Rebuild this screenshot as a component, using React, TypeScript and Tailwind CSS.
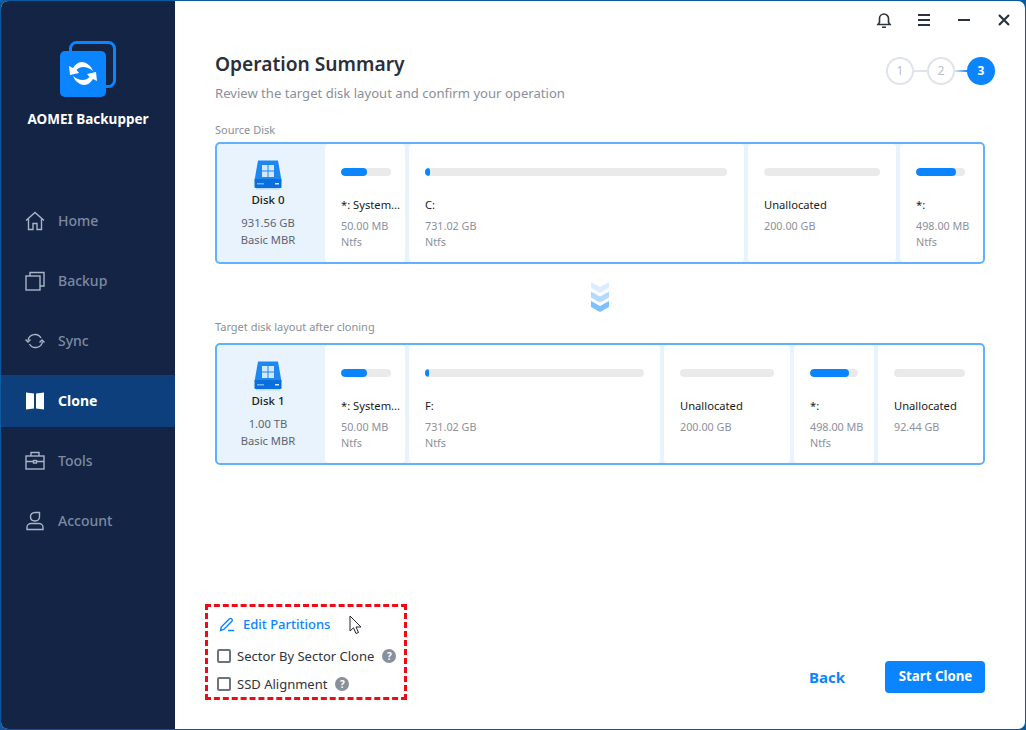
const font = { fontFamily: '"Noto Sans", sans-serif' };

// Sidebar entries, the icons are drawn by hand to match the original app
const navItems = [
  {
    label: "Home",
    icon: (
      <svg width="20" height="20" viewBox="0 0 20 20" fill="none" stroke="#a9b4c6" strokeWidth="1.4">
        <path d="M1 9.500 10 1.500l9 8M3.500 8v10.500h4.500v-6h4v6h4.500V8" />
      </svg>
    ),
  },
  {
    label: "Backup",
    icon: (
      <svg width="20" height="20" viewBox="0 0 20 20" fill="none" stroke="#a9b4c6" strokeWidth="1.4">
        <rect x="1" y="5" width="14" height="14" />
        <path d="M5 5V1.500h14V15h-4" />
      </svg>
    ),
  },
  {
    label: "Sync",
    icon: (
      <svg width="20" height="20" viewBox="0 0 20 20" fill="none" stroke="#a9b4c6" strokeWidth="1.4">
        <path d="M3 9.500a7 7 0 0 1 13-2.500M17.500 10.500a7 7 0 0 1-13 2.500" />
        <path d="M0.500 8.500 3 11l2.500-2.500M14.500 11.500 17 9l2.500 2.500" />
      </svg>
    ),
  },
  {
    label: "Clone",
    active: true,
    icon: (
      <svg width="20" height="20" viewBox="0 0 20 20" fill="#ffffff">
        <path d="M1 1.500 9 2.500v15l-8 1zM11 2.500l8-1v17l-8-1z" />
      </svg>
    ),
  },
  {
    label: "Tools",
    icon: (
      <svg width="20" height="20" viewBox="0 0 20 20" fill="none" stroke="#a9b4c6" strokeWidth="1.4">
        <rect x="1" y="5" width="18" height="13" />
        <path d="M6 5V1.500h8V5M1 10.500h7M12 10.500h7" />
        <rect x="8.500" y="9.500" width="3" height="2.500" />
      </svg>
    ),
  },
  {
    label: "Account",
    icon: (
      <svg width="20" height="20" viewBox="0 0 20 20" fill="none" stroke="#a9b4c6" strokeWidth="1.4">
        <path d="M10 1.500c-3 0-4.500 2-4.500 4.300 0 2.200 1.500 4.200 4.500 4.200s4.500-2 4.500-4.200V1.500z" />
        <path d="M2 18.500v-2.500c0-2 2-3.500 4-3.500h8c2 0 4 1.500 4 3.500v2.500z" />
      </svg>
    ),
  },
];

const sourcePartitions = [
  { name: "*: System...", size: "50.00 MB", fs: "Ntfs", used: 52, width: "w-[80px] pr-[14px]" },
  { name: "C:", size: "731.02 GB", fs: "Ntfs", used: 1.5, width: "flex-1 pr-[17px]" },
  { name: "Unallocated", size: "200.00 GB", fs: "", used: 0, width: "w-[148px] pr-[16px]" },
  { name: "*:", size: "498.00 MB", fs: "Ntfs", used: 82, width: "w-[83px] pr-[18px]" },
];

const targetPartitions = [
  { name: "*: System...", size: "50.00 MB", fs: "Ntfs", used: 52, width: "w-[80px] pr-[14px]" },
  { name: "F:", size: "731.02 GB", fs: "Ntfs", used: 2, width: "flex-1 pr-[16px]" },
  { name: "Unallocated", size: "200.00 GB", fs: "", used: 0, width: "w-[126px] pr-[16px]" },
  { name: "*:", size: "498.00 MB", fs: "Ntfs", used: 82, width: "w-[80px] pr-[16px]" },
  { name: "Unallocated", size: "92.44 GB", fs: "", used: 0, width: "w-[105px] pr-[18px]" },
];

function DiskIcon() {
  return (
    <svg width="30" height="32" viewBox="0 0 30 32">
      <path d="M5 1.500h20l3.500 20h-27z" fill="#1e88f0" />
      <rect x="1.500" y="20" width="27" height="9" rx="1" fill="#0a6fdc" />
      <rect x="3" y="29" width="24" height="1.500" fill="#bcdcfb" />
      <rect x="9" y="6" width="5.500" height="5.500" fill="#d4e8fc" />
      <rect x="15.500" y="6" width="5.500" height="5.500" fill="#d4e8fc" />
      <rect x="9" y="12.500" width="5.500" height="5.500" fill="#d4e8fc" />
      <rect x="15.500" y="12.500" width="5.500" height="5.500" fill="#d4e8fc" />
      <rect x="4" y="24" width="7" height="1.500" fill="#6db4f7" />
      <rect x="22" y="24" width="4" height="1.500" fill="#d4e8fc" />
    </svg>
  );
}

function PartitionCard({ name, size, fs, used, width }: (typeof sourcePartitions)[number]) {
  return (
    <div className={`${width} h-full rounded-[4px] bg-white pl-[16px] pt-[24px]`}>
      <div className="h-[8px] overflow-hidden rounded-full bg-[#eaeaea]">
        <div className="h-full rounded-full bg-[#0a84ff]" style={{ width: `${used}%` }} />
      </div>
      <div className="mt-[20px] whitespace-nowrap text-[11.200px] leading-[18px] text-[#1a1a1a]">{name}</div>
      <div className="mt-[3px] whitespace-nowrap text-[10.800px] leading-[18px] text-[#8c919c]">{size}</div>
      {fs && <div className="-mt-[2px] text-[10.800px] leading-[18px] text-[#8c919c]">{fs}</div>}
    </div>
  );
}

function DiskRow({
  name,
  size,
  kind,
  partitions,
}: {
  name: string;
  size: string;
  kind: string;
  partitions: typeof sourcePartitions;
}) {
  return (
    <div className="flex h-[122px] items-stretch gap-[4px] rounded-[5px] border-2 border-[#62b1ff] bg-[#e8f3fe]">
      <div className="flex w-[104px] shrink-0 flex-col items-center pr-[2px] pt-[15px]">
        <DiskIcon />
        <div className="text-[11.500px] font-medium leading-[18px] text-[#1a1a1a]">{name}</div>
        <div className="mt-[5px] text-[11.200px] leading-[18px] text-[#5e6470]">{size}</div>
        <div className="-mt-[1px] text-[11.200px] leading-[18px] text-[#5e6470]">{kind}</div>
      </div>
      {partitions.map((p, i) => (
        <PartitionCard key={i} {...p} />
      ))}
    </div>
  );
}

function Steps() {
  return (
    <div className="flex items-center">
      <div className="flex h-[28px] w-[28px] items-center justify-center rounded-full border-2 border-[#dfe4ea] text-[12px] text-[#b8bfca]">1</div>
      <div className="h-[2px] w-[13px] bg-[#dfe4ea]" />
      <div className="flex h-[28px] w-[28px] items-center justify-center rounded-full border-2 border-[#dfe4ea] text-[12px] text-[#b8bfca]">2</div>
      <div className="h-[2px] w-[12px] bg-gradient-to-r from-[#dfe4ea] to-[#0a84ff]" />
      <div className="flex h-[28px] w-[28px] items-center justify-center rounded-full bg-[#0a84ff] text-[12px] font-bold text-white">3</div>
    </div>
  );
}

function HelpDot() {
  return (
    <span className="flex h-[14px] w-[14px] items-center justify-center rounded-full bg-[#8a8f9c] text-[10px] font-bold leading-none text-white">
      ?
    </span>
  );
}

function CheckRow({ label }: { label: string }) {
  return (
    <div className="flex items-center">
      <span className="h-[14px] w-[14px] rounded-[2px] border-2 border-[#6e727c] bg-white" />
      <span className="ml-[6px] text-[13px] leading-[18px] text-[#30343c]">{label}</span>
      <span className="ml-[8px]">
        <HelpDot />
      </span>
    </div>
  );
}

export default function App() {
  return (
    <div style={font} className="h-[730px] w-[1026px] overflow-hidden bg-[#0a5a9e] pb-[1px] pl-[1px] pr-[1px] pt-[1px]">
      <div className="flex h-full w-full overflow-hidden rounded-[7px] bg-white">
        {/* sidebar */}
        <aside className="flex w-[174px] shrink-0 flex-col bg-[#132445]">
          <div className="flex flex-col items-center pt-[40px]">
            <svg width="56" height="58" viewBox="0 0 56 58">
              <rect x="10.500" y="1.500" width="44" height="44" rx="6" fill="none" stroke="#0a84ff" strokeWidth="3" />
              <rect x="0" y="10" width="46" height="46" rx="5" fill="#0a84ff" />
              <path d="M9 25 10 34 19 32 16.500 29C20 25 27 25 33 30 31 24 25 21 22 21 18 21 15 24 13 27Z" fill="#ffffff" />
              <path d="M37 40 36 31 27 33 29.500 36C26 40 19 40 13 35 15 41 21 44 24 44 28 44 31 41 33 38Z" fill="#ffffff" />
            </svg>
            <div className="mt-[10px] text-[13.500px] font-bold leading-[20px] text-white">AOMEI Backupper</div>
          </div>
          <nav className="mt-[66px] flex flex-col gap-[8px]">
            {navItems.map((item) => (
              <div
                key={item.label}
                className={`flex h-[52px] items-center pl-[24px] ${item.active ? "bg-[#0c3f7c]" : ""}`}
              >
                {item.icon}
                <span
                  className={`ml-[13px] text-[14px] leading-[20px] ${
                    item.active ? "font-bold text-white" : "font-medium text-[#7e8aa2]"
                  }`}
                >
                  {item.label}
                </span>
              </div>
            ))}
          </nav>
        </aside>

        {/* main content */}
        <main className="relative flex min-w-0 flex-1 flex-col pl-[40px] pr-[40px]">
          <div className="-mr-[40px] flex h-[41px] items-center justify-end gap-[25px] pb-[4px] pr-[14px]">
            <svg width="16" height="16" viewBox="0 0 16 16" fill="none" stroke="#2c3340" strokeWidth="1.600">
              <path d="M2 12.500h12l-1.500-2V6.500a4.500 4.500 0 0 0-9 0v4z" />
              <path d="M6 15.200h4" />
            </svg>
            <svg width="14" height="14" viewBox="0 0 14 14" stroke="#2c3340" strokeWidth="1.800">
              <path d="M1 2h12M1 7h12M1 12h12" />
            </svg>
            <svg width="16" height="14" viewBox="0 0 16 14" stroke="#2c3340" strokeWidth="2">
              <path d="M2 7h12" />
            </svg>
            <svg width="14" height="14" viewBox="0 0 14 14" stroke="#2c3340" strokeWidth="2.200">
              <path d="M2 2l10 10M12 2 2 12" />
            </svg>
          </div>

          <div className="flex items-start justify-between">
            <div>
              <h1 className="mt-[9px] text-[19.200px] font-semibold leading-[26px] text-[#2a2f38]">Operation Summary</h1>
              <p className="mt-[7px] text-[13.100px] leading-[18px] text-[#8a8f99]">
                Review the target disk layout and confirm your operation
              </p>
            </div>
            <div className="mt-[15px] -mr-[10px]">
              <Steps />
            </div>
          </div>

          <div className="mt-[20px] text-[11px] leading-[16px] text-[#8a8f99]">Source Disk</div>
          <div className="mt-[4px]">
            <DiskRow name="Disk 0" size="931.56 GB" kind="Basic MBR" partitions={sourcePartitions} />
          </div>

          <div className="mt-[18px] flex justify-center">
            <svg width="18" height="30" viewBox="0 0 18 30">
              <path d="M0 0l9 5 9-5v6l-9 5-9-5z" fill="#dbecff" />
              <path d="M0 9.500l9 5 9-5v6l-9 5-9-5z" fill="#b4d9ff" />
              <path d="M0 19l9 5 9-5v6l-9 5-9-5z" fill="#7cc0ff" />
            </svg>
          </div>

          <div className="mt-[7px] text-[11px] leading-[16px] text-[#8a8f99]">Target disk layout after cloning</div>
          <div className="mt-[8px]">
            <DiskRow name="Disk 1" size="1.00 TB" kind="Basic MBR" partitions={targetPartitions} />
          </div>

          <div className="mt-[139px] flex items-end justify-between">
            <div className="-ml-[10px] mb-[1px] flex h-[96px] w-[202px] flex-col border-[3px] border-dashed border-[#f00a14] pl-[9px] pt-[7px]">
              <div className="flex items-center pl-[2px]">
                <svg width="16" height="16" viewBox="0 0 16 16" fill="none" stroke="#0a84ff" strokeWidth="1.400">
                  <path d="M1.500 14.500l.7-3.500 8-8a1.500 1.500 0 0 1 2.500 2.500l-8 8zM9 14.500h6" />
                </svg>
                <span className="ml-[8px] text-[13px] font-medium leading-[20px] text-[#0a84ff]">Edit Partitions</span>
              </div>
              <div className="mt-[13px]">
                <CheckRow label="Sector By Sector Clone" />
              </div>
              <div className="mt-[10px]">
                <CheckRow label="SSD Alignment" />
              </div>
            </div>
            <div className="mb-[8px] flex items-center">
              <span className="text-[15px] font-bold leading-[20px] text-[#0a84ff]">Back</span>
              <button className="ml-[40px] h-[32px] w-[100px] rounded-[4px] bg-[#0a84ff] pl-[1px] text-[13.300px] font-bold text-white">
                Start Clone
              </button>
            </div>
          </div>

          {/* mouse pointer captured in the screenshot */}
          <svg className="absolute left-[174px] top-[614px]" width="14" height="20" viewBox="0 0 14 20">
            <path d="M1 1v15l3.500-3.200L7 18.500l2.500-1-2.500-5.500h5z" fill="#ffffff" stroke="#22262c" strokeWidth="1" />
          </svg>
        </main>
      </div>
    </div>
  );
}
